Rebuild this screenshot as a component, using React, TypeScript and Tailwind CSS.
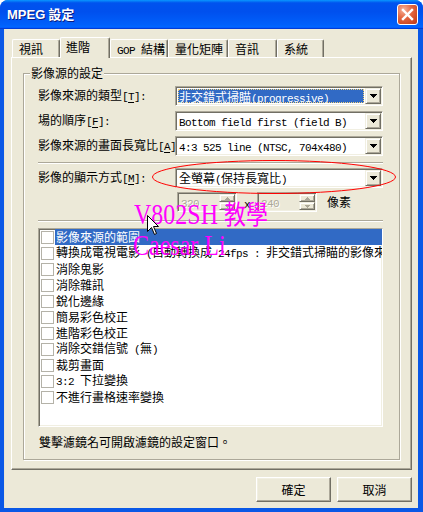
import React from "react";

const MONO = "font-['Liberation_Mono',monospace] text-[11px] tracking-[-0.6px] whitespace-pre";
const SUNKEN =
  "border border-t-[#ACA899] border-l-[#ACA899] border-r-white border-b-white shadow-[inset_1px_1px_0_#716F64,inset_-1px_-1px_0_#F1EFE2]";
const RAISED =
  "border border-t-[#F1EFE2] border-l-[#F1EFE2] border-r-[#716F64] border-b-[#716F64] shadow-[inset_1px_1px_0_#ffffff,inset_-1px_-1px_0_#ACA899]";

function M({ s }: { s: string }) {
  const parts = s.split(/([\x00-\x7f]+)/).filter((p) => p.length > 0);
  return (
    <>
      {parts.map((p, i) =>
        /^[\x00-\x7f]+$/.test(p) ? (
          <span key={i} className={MONO}>
            {p}
          </span>
        ) : (
          <span key={i}>{p}</span>
        )
      )}
    </>
  );
}

function Label({ text, acc, colon = true }: { text: string; acc: string; colon?: boolean }) {
  return (
    <span className="whitespace-nowrap">
      {text}
      <span className={MONO}>
        [<span className="underline underline-offset-[2px]">{acc}</span>]{colon ? ":" : ""}
      </span>
    </span>
  );
}

function DownArrow({ color = "#000000" }: { color?: string }) {
  return (
    <svg width="7" height="4" viewBox="0 0 7 4" shapeRendering="crispEdges">
      <rect x="0" y="0" width="7" height="1" fill={color} />
      <rect x="1" y="1" width="5" height="1" fill={color} />
      <rect x="2" y="2" width="3" height="1" fill={color} />
      <rect x="3" y="3" width="1" height="1" fill={color} />
    </svg>
  );
}

function SmallArrow({ up }: { up?: boolean }) {
  const c = "#ACA899";
  return (
    <svg width="5" height="3" viewBox="0 0 5 3" shapeRendering="crispEdges">
      {up ? (
        <>
          <rect x="2" y="0" width="1" height="1" fill={c} />
          <rect x="1" y="1" width="3" height="1" fill={c} />
          <rect x="0" y="2" width="5" height="1" fill={c} />
        </>
      ) : (
        <>
          <rect x="0" y="0" width="5" height="1" fill={c} />
          <rect x="1" y="1" width="3" height="1" fill={c} />
          <rect x="2" y="2" width="1" height="1" fill={c} />
        </>
      )}
    </svg>
  );
}

function Combo({ text, selected }: { text: string; selected?: boolean }) {
  return (
    <div className={`h-[20px] w-[208px] shrink-0 flex bg-white p-[1px] ${SUNKEN}`}>
      <div className="flex-1 flex overflow-hidden">
        {selected ? (
          <div className="flex-1 my-[1px] ml-[1px] mr-[1px] bg-[#316AC5] text-white border border-dotted border-[#f3d27a] leading-[14px] whitespace-nowrap">
            <M s={text} />
          </div>
        ) : (
          <div className="flex-1 pl-[2px] leading-[16px] whitespace-nowrap">
            <M s={text} />
          </div>
        )}
      </div>
      <div className={`w-[16px] h-[16px] bg-[#ECE9D8] flex items-center justify-center ${RAISED}`}>
        <DownArrow />
      </div>
    </div>
  );
}

function Spin({ v }: { v: string }) {
  return (
    <div className={`w-[60px] h-[20px] flex bg-[#ECE9D8] p-[1px] ${SUNKEN}`}>
      <div className={`flex-1 pl-[2px] leading-[16px] text-[#ACA899] [text-shadow:1px_1px_0_#ffffff]`}>
        <span className={MONO}>{v}</span>
      </div>
      <div className="w-[16px] flex flex-col">
        <div className={`h-[8px] bg-[#ECE9D8] flex items-center justify-center ${RAISED}`}>
          <SmallArrow up />
        </div>
        <div className={`h-[8px] bg-[#ECE9D8] flex items-center justify-center ${RAISED}`}>
          <SmallArrow />
        </div>
      </div>
    </div>
  );
}

const tabs = [
  { l: "視訊", w: 48 },
  { l: "進階", w: 50, sel: true },
  { l: "GOP 結構", w: 58 },
  { l: "量化矩陣", w: 60 },
  { l: "音訊", w: 49 },
  { l: "系統", w: 47 },
];

const items = [
  "影像來源的範圍",
  "轉換成電視電影 (自動轉換成 24fps : 非交錯式掃瞄的影像來源)",
  "消除鬼影",
  "消除雜訊",
  "銳化邊緣",
  "簡易彩色校正",
  "進階彩色校正",
  "消除交錯信號 (無)",
  "裁剪畫面",
  "3:2 下拉變換",
  "不進行畫格速率變換",
];

export default function App() {
  return (
    <div className="relative w-[423px] h-[512px] overflow-hidden rounded-t-[8px] bg-[#0a58e6] flex flex-col font-['Noto_Sans_CJK_TC',sans-serif] text-[12px] leading-[16px] text-black">
      {/* Title bar */}
      <div className="h-[29px] shrink-0 flex items-center pl-[7px] pr-[5px] bg-[linear-gradient(180deg,#0997ff_0%,#0053ee_10%,#0050ee_40%,#0060fb_85%,#0066ff_92%,#005bff_95%,#003dd7_97%,#003dd7_100%)]">
        <div className="flex-1 text-white font-bold [text-shadow:1px_1px_0_#0a1a80] whitespace-nowrap">
          <span className="font-['Liberation_Sans',sans-serif] text-[13px]">MPEG</span>
          <span className="text-[13px]"> 設定</span>
        </div>
        <div className="w-[21px] h-[21px] rounded-[3px] border border-white bg-[radial-gradient(circle_at_30%_25%,#f6b39b_0%,#e56a45_40%,#cf4a25_75%,#b8381a_100%)] flex items-center justify-center">
          <svg width="13" height="13" viewBox="0 0 13 13">
            <line x1="2" y1="2" x2="11" y2="11" stroke="#ffffff" strokeWidth="2.4" strokeLinecap="square" />
            <line x1="11" y1="2" x2="2" y2="11" stroke="#ffffff" strokeWidth="2.4" strokeLinecap="square" />
          </svg>
        </div>
      </div>

      {/* Client area */}
      <div className="ml-[4px] mr-[5px] h-[479px] bg-[#ECE9D8] flex flex-col pt-[8px] pl-[7px] pr-[6px] shadow-[inset_1px_0_0_#e7e4d3]">
        {/* Tabs */}
        <div className="h-[20px] flex items-end ml-[1px]">
          {tabs.map((t) =>
            t.sel ? (
              <div
                key={t.l}
                style={{ width: t.w }}
                className="relative z-10 h-[21px] mb-[-1px] bg-[#ECE9D8] border-t border-l border-t-white border-l-white border-r border-r-[#716F64] shadow-[inset_-1px_0_0_#ACA899] rounded-t-[2px] pl-[5px] leading-[17px] whitespace-nowrap"
              >
                <M s={t.l} />
              </div>
            ) : (
              <div
                key={t.l}
                style={{ width: t.w }}
                className="h-[18px] border-t border-l border-t-white border-l-white border-r border-r-[#716F64] shadow-[inset_-1px_0_0_#ACA899] rounded-t-[2px] pl-[6px] leading-[17px] whitespace-nowrap"
              >
                <M s={t.l} />
              </div>
            )
          )}
        </div>

        {/* Panel */}
        <div className="h-[413px] border border-t-white border-l-white border-r-[#716F64] border-b-[#716F64] shadow-[inset_-1px_-1px_0_#ACA899] pt-[15px] pl-[11px]">
          {/* Group box */}
          <div className="relative w-[377px] h-[387px] border border-[#ACA899] shadow-[inset_1px_1px_0_#ffffff,1px_1px_0_#ffffff] pt-[12px] pl-[14px] pr-[16px] flex flex-col">
            <span className="absolute -top-[9px] left-[6px] px-[1px] bg-[#ECE9D8] leading-[16px]">影像源的設定</span>

            <div className="flex items-center h-[20px]">
              <div className="w-[137px] shrink-0">
                <Label text="影像來源的類型" acc="T" />
              </div>
              <Combo text="非交錯式掃瞄(progressive)" selected />
            </div>
            <div className="flex items-center h-[20px] mt-[5px]">
              <div className="w-[137px] shrink-0">
                <Label text="場的順序" acc="F" />
              </div>
              <Combo text="Bottom field first (field B)" />
            </div>
            <div className="flex items-center h-[20px] mt-[5px]">
              <div className="w-[137px] shrink-0">
                <Label text="影像來源的畫面長寬比" acc="A" colon={false} />
              </div>
              <Combo text="4:3 525 line (NTSC, 704x480)" />
            </div>

            <div className="mt-[6px] h-[2px] border-t border-t-[#ACA899] border-b border-b-white" />

            <div className="flex items-center h-[20px] mt-[4px]">
              <div className="w-[137px] shrink-0">
                <Label text="影像的顯示方式" acc="M" />
              </div>
              <Combo text="全螢幕(保持長寬比)" />
            </div>

            <div className="flex items-center h-[20px] mt-[4px] pl-[139px]">
              <Spin v="320" />
              <div className="w-[20px] text-center pt-[3px]">
                <span className={MONO}>x</span>
              </div>
              <Spin v="240" />
              <span className="ml-[10px]">像素</span>
            </div>

            <div className="mt-[8px] h-[2px] border-t border-t-[#ACA899] border-b border-b-white" />

            <div className={`mt-[6px] h-[199px] bg-white overflow-hidden ${SUNKEN}`}>
              {items.map((it, i) => (
                <div key={i} className="flex items-center h-[16px] pl-[2px] whitespace-nowrap">
                  <div className="w-[13px] h-[13px] shrink-0 border border-[#B4B2A8] bg-white" />
                  {i === 0 ? (
                    <div className="flex-1 ml-[1px] pl-[1px] h-[16px] leading-[16px] bg-[#316AC5] text-white">
                      <M s={it} />
                    </div>
                  ) : (
                    <div className="ml-[1px] pl-[1px] leading-[16px]">
                      <M s={it} />
                    </div>
                  )}
                </div>
              ))}
            </div>

            <div className="mt-[7px] pl-[1px] leading-[16px]">雙擊濾鏡名可開啟濾鏡的設定窗口。</div>
          </div>
        </div>

        {/* Buttons */}
        <div className="mt-[7px] flex justify-end gap-[6px]">
          <div className="w-[75px] h-[25px] flex items-center justify-center border border-t-white border-l-white border-r-[#716F64] border-b-[#716F64] shadow-[inset_-1px_-1px_0_#ACA899,inset_1px_1px_0_#F1EFE2]">
            確定
          </div>
          <div className="w-[75px] h-[25px] flex items-center justify-center border border-t-white border-l-white border-r-[#716F64] border-b-[#716F64] shadow-[inset_-1px_-1px_0_#ACA899,inset_1px_1px_0_#F1EFE2]">
            取消
          </div>
        </div>
      </div>

      {/* Red annotation ellipse */}
      <svg className="absolute left-[151px] top-[159px] pointer-events-none" width="246" height="36" viewBox="0 0 246 36">
        <ellipse cx="123" cy="18" rx="121.5" ry="16.5" fill="none" stroke="#ff0000" strokeWidth="1" />
      </svg>

      {/* Watermark */}
      <div className="absolute left-[134px] top-[198px] origin-top-left scale-y-[1.2] text-[24px] leading-[24px] text-[#ff00ff] whitespace-nowrap pointer-events-none">
        <span className="font-['Liberation_Serif',serif]">V802SH </span>
        <span className="font-['Noto_Sans_CJK_TC',sans-serif] text-[22px]">教學</span>
      </div>
      <div className="absolute left-[133px] top-[231px] origin-top-left scale-y-[1.2] text-[24px] leading-[24px] text-[#ff00ff] font-['Liberation_Serif',serif] whitespace-nowrap pointer-events-none">
        Caesar Li
      </div>

      {/* Mouse cursor */}
      <svg className="absolute left-[147px] top-[215px] pointer-events-none" width="13" height="21" viewBox="0 0 13 21">
        <path d="M0.5 0.5 L0.5 16.5 L4.5 12.5 L7.5 19.5 L9.5 18.5 L6.5 11.5 L11.5 11.5 Z" fill="#ffffff" stroke="#000000" strokeWidth="1" strokeLinejoin="miter" />
      </svg>
    </div>
  );
}
